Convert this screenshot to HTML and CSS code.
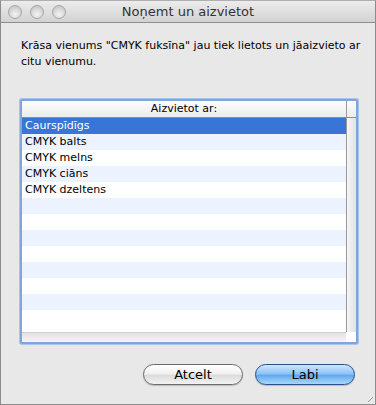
FILE: index.html
```html
<!DOCTYPE html>
<html lang="lv">
<head>
  <meta charset="UTF-8" />
  <title>Noņemt un aizvietot</title>
  <link rel="stylesheet" href="styles.css">
</head>
<body>
<div class="window">
  <div class="titlebar">
    <div class="lights">
      <span class="light"></span>
      <span class="light"></span>
      <span class="light"></span>
    </div>
    <div class="title">Noņemt un aizvietot</div>
  </div>

  <div class="content">
    <p class="message">Krāsa vienums "CMYK fuksīna" jau tiek lietots un jāaizvieto ar citu vienumu.</p>

    <div class="table-frame">
      <div class="table">
        <div class="table-main">
          <div class="header">Aizvietot ar:</div>
          <div class="rows">
            <div class="row selected">Caurspīdīgs</div>
            <div class="row">CMYK balts</div>
            <div class="row">CMYK melns</div>
            <div class="row">CMYK ciāns</div>
            <div class="row">CMYK dzeltens</div>
            <div class="row"></div>
            <div class="row"></div>
            <div class="row"></div>
            <div class="row"></div>
            <div class="row"></div>
            <div class="row"></div>
            <div class="row"></div>
            <div class="row"></div>
          </div>
        </div>
        <div class="scroll-col">
          <div class="corner"></div>
        </div>
      </div>
      <div class="hscroll"></div>
    </div>

    <div class="buttons">
      <button class="btn">Atcelt</button>
      <button class="btn primary">Labi</button>
    </div>
  </div>
  <div class="grip"></div>
</div>
</body>
</html>
```

FILE: styles.css
```css
body {
  margin: 0;
  font-family: "DejaVu Sans", "Liberation Sans", sans-serif;
  background: #e8e8e8;
}

.window {
  position: relative;
  width: 376px;
  height: 405px;
  box-sizing: border-box;
  border: 1px solid #8c8c8c;
  border-top-color: #b0b0b0;
  background: #e8e8e8;
  overflow: hidden;
}

.titlebar {
  height: 21px;
  display: flex;
  align-items: center;
  background: linear-gradient(#ececec, #d2d2d2);
  border-bottom: 1px solid #8e8e8e;
  position: relative;
}

.lights {
  display: flex;
  gap: 8px;
  padding-left: 7px;
}

.light {
  width: 12px;
  height: 12px;
  border-radius: 50%;
  border: 1px solid #a6a6a6;
  background: radial-gradient(circle at 50% 70%, #f4f4f4 0%, #d6d6d6 55%, #bdbdbd 100%);
}

.title {
  position: absolute;
  left: 0;
  right: 0;
  text-align: center;
  font-size: 13px;
  color: #333;
  line-height: 21px;
}

.content {
  padding: 15px 19px 0 19px;
}

.message {
  margin: 0 0 0 1px;
  font-size: 11px;
  line-height: 16px;
  color: #000;
  width: 345px;
}

.table-frame {
  margin-top: 29px;
  height: 241px;
  width: 334px;
  border: 2px solid #7fa5dc;
  box-shadow: 0 0 0 1px #a9c3ea;
  border-radius: 2px;
  background: #fff;
  display: flex;
  flex-direction: column;
}

.table {
  flex: 1;
  display: flex;
  overflow: hidden;
}

.table-main {
  flex: 1;
  display: flex;
  flex-direction: column;
}

.header {
  height: 17px;
  box-sizing: border-box;
  border-bottom: 1px solid #8f8f8f;
  background: linear-gradient(#fdfdfd, #ececec);
  font-size: 11px;
  line-height: 16px;
  text-align: center;
  color: #000;
}

.rows {
  flex: 1;
  overflow: hidden;
}

.row {
  height: 16px;
  font-size: 11px;
  line-height: 16px;
  padding-left: 3px;
  color: #000;
}

.row:nth-child(even) {
  background: #edf3fe;
}

.row.selected {
  background: #3875d7;
  color: #fff;
}

.scroll-col {
  width: 9px;
  border-left: 1px solid #9a9a9a;
  background: linear-gradient(90deg, #f6f6f6, #e2e2e2);
}

.corner {
  height: 16px;
  border-bottom: 1px solid #8f8f8f;
  background: linear-gradient(#fdfdfd, #ececec);
}

.hscroll {
  height: 9px;
  margin-right: 10px;
  background: linear-gradient(#e2e2e2, #f6f6f6);
  border-top: 1px solid #d0d0d0;
}

.buttons {
  display: flex;
  justify-content: flex-end;
  gap: 12px;
  margin-top: 20px;
  margin-right: 1px;
}

.btn {
  width: 100px;
  height: 21px;
  border-radius: 11px;
  border: 1px solid #6b6b6b;
  background: linear-gradient(#ffffff 0%, #f1f1f1 45%, #dcdcdc 55%, #f2f2f2 100%);
  font-family: "DejaVu Sans", "Liberation Sans", sans-serif;
  font-size: 13px;
  color: #000;
  padding: 0;
  box-shadow: 0 1px 1px rgba(0, 0, 0, 0.2);
}

.btn.primary {
  border-color: #2a4f8c;
  background: linear-gradient(#cfe6fd 0%, #8fc4f6 45%, #63a9ef 55%, #a8d7fb 100%);
}

.grip {
  position: absolute;
  right: 2px;
  bottom: 2px;
  width: 10px;
  height: 10px;
  background: repeating-linear-gradient(135deg, transparent 0 2px, #999 2px 3px, transparent 3px 4px);
  clip-path: polygon(100% 0, 100% 100%, 0 100%);
}
```
